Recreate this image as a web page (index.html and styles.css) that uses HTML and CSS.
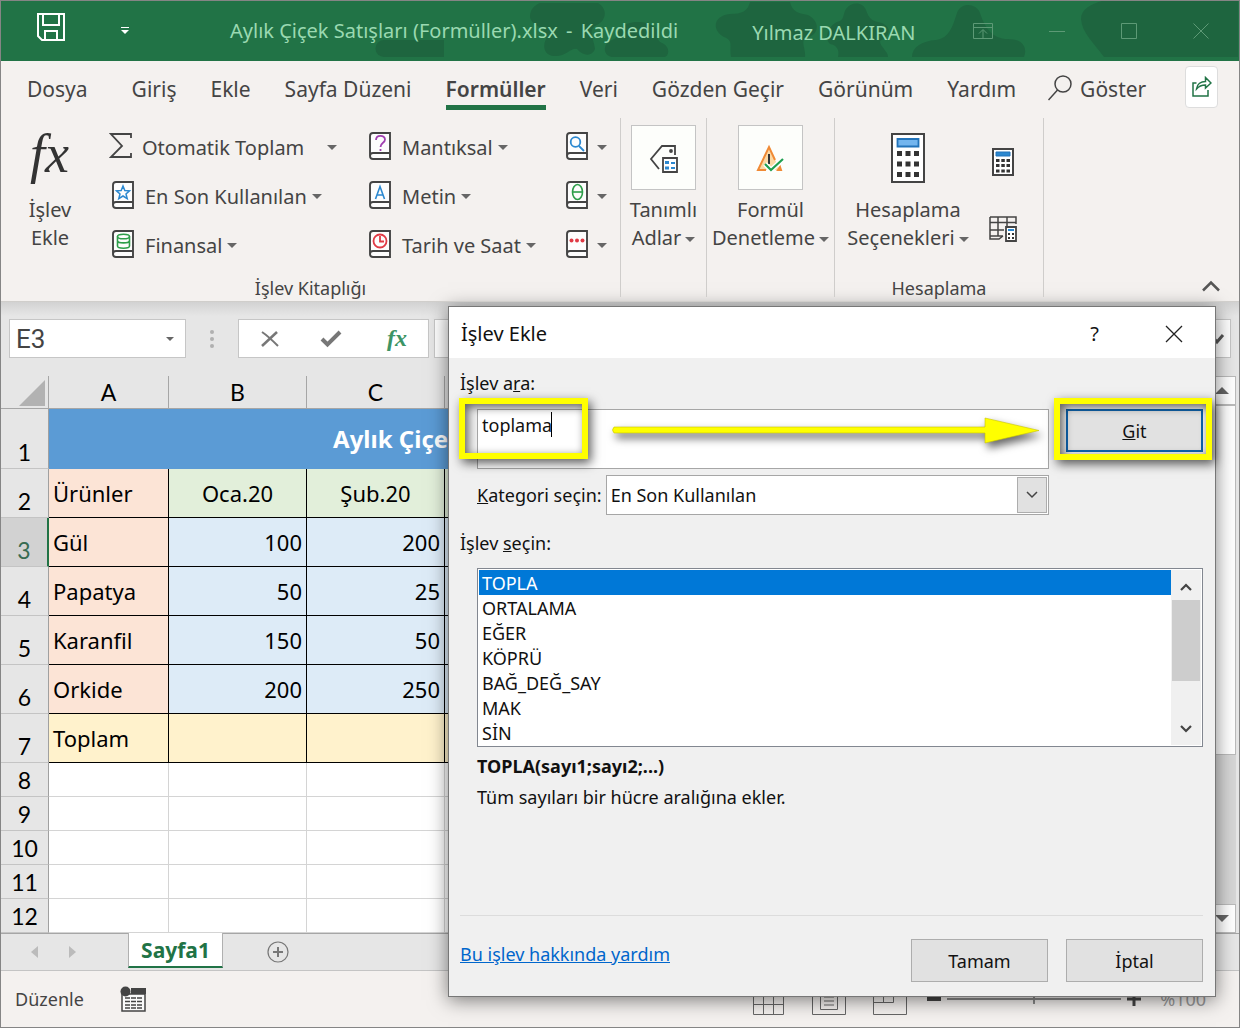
FILE: index.html
```html
<!DOCTYPE html>
<html lang="tr">
<head>
<meta charset="utf-8">
<meta name="viewport" content="width=device-width, initial-scale=1">
<title>Aylık Çiçek Satışları (Formüller).xlsx</title>
<link rel="stylesheet" href="styles.css">
</head>
<body>
<svg class="sprite" aria-hidden="true">
  <symbol id="book" viewBox="0 0 22 28">
    <path d="M4 1H21V27H4Q1 27 1 24V4Q1 1 4 1Z" fill="#fdfdfd"/>
    <path d="M4 1H21V27H4Q1 27 1 24V4Q1 1 4 1ZM1 24Q1 21 4 21H21" fill="none" stroke="#444" stroke-width="1.9"/>
  </symbol>
</svg>

<header class="titlebar">
  <svg class="pattern" viewBox="370 0 870 60" width="870" height="60" aria-hidden="true">
    <g fill="#1e653f">
      <path d="M384 39H444V56H384A8 8 0 0 1 384 39Z"/>
      <path d="M540 2H598C608 8 607 20 595 25C588 30 594 38 595 48C592 56 583 55 577 48C571 46 566 56 554 55C543 54 543 44 546 38C549 27 531 25 530 16C530 8 535 4 540 2Z"/>
      <path d="M620 28C626 20 645 18 656 27C660 32 654 38 662 42C671 46 669 56 664 56H612C602 54 603 42 612 39C620 36 614 34 620 28Z"/>
      <path d="M750 1H790C792 10 797 12 808 14C820 20 820 34 806 37C800 40 806 48 805 56H731C729 44 734 40 724 36C710 28 715 14 730 13C742 13 748 10 750 1Z"/>
      <path d="M846 8C852 0 863 1 866 9C869 18 872 20 882 22C894 28 888 36 880 40C880 46 888 50 888 56H838C840 48 836 44 830 43C823 36 830 22 840 20C844 18 843 13 846 8Z"/>
      <path d="M957 12C961 1 976 2 980 12C984 24 990 36 1005 38C1022 37 1028 46 1024 56H912C912 46 922 40 936 39C950 37 953 24 957 12Z"/>
      <path d="M1102 0H1238V56H1104C1094 42 1082 32 1081 18C1081 8 1091 3 1102 0Z"/>
    </g>
  </svg>
  <button class="tool save" aria-label="Kaydet"><svg width="28" height="28" viewBox="0 0 28 28" fill="none" stroke="#fff" stroke-width="2"><path d="M1 1H27V27H5L1 23ZM6 1V12H22V1M8 27V18H20V27"/></svg></button>
  <button class="tool quick" aria-label="Hızlı erişim"><svg width="8" height="8" viewBox="0 0 8 8" fill="#fff"><path d="M0 0H8V1H0ZM0 3H8L4 7Z"/></svg></button>
  <h1 class="doc">Aylık Çiçek Satışları (Formüller).xlsx <span>-</span> Kaydedildi</h1>
  <span class="user">Yılmaz DALKIRAN</span>
  <div class="window-tools">
    <button class="tool" aria-label="Şerit seçenekleri"><svg width="20" height="16" viewBox="0 0 20 16"><path d="M.5 .5H19.5V15.5H.5ZM.5 4.5H19.5M10 15V7M6 10.500L10 6.500L14 10.500"/></svg></button>
    <button class="tool" aria-label="Simge durumu"><svg width="16" height="16" viewBox="0 0 16 16"><path d="M0 8.500H16"/></svg></button>
    <button class="tool" aria-label="Ekranı kapla"><svg width="16" height="16" viewBox="0 0 16 16"><path d="M.5 .5H15.500V15.500H.5Z"/></svg></button>
    <button class="tool" aria-label="Kapat"><svg width="16" height="16" viewBox="0 0 16 16"><path d="M.5 .5L15.500 15.500M15.500 .5L.5 15.500"/></svg></button>
  </div>
</header>

<section class="ribbon">
  <nav class="tabs">
    <a class="file" href="#">Dosya</a><a href="#">Giriş</a><a href="#">Ekle</a><a href="#">Sayfa Düzeni</a><a class="current" href="#">Formüller</a><a href="#">Veri</a><a href="#">Gözden Geçir</a><a href="#">Görünüm</a><a href="#">Yardım</a>
    <a class="tell" href="#"><svg width="24" height="26" viewBox="0 0 24 26" fill="none" stroke="#444" stroke-width="1.500"><circle cx="15" cy="9" r="8"/><path d="M9.500 15L.5 25"/></svg>Göster</a>
    <button class="share" aria-label="Paylaş"><svg width="20" height="22" viewBox="0 0 20 22" fill="none" stroke="#217346" stroke-width="1.500"><path d="M4.500 7H1V20H16V14"/><path d="M4.500 13C5 8 9 5.500 13.500 5.500V1.500L19 7L13.500 12V9C9.500 9 7 10 4.500 13Z"/></svg></button>
  </nav>
  <div class="groups">
    <div class="group library">
      <div class="library-body">
        <button class="big"><svg class="big-icon" width="80" height="60" viewBox="0 0 80 60"><text x="20" y="40" font-family="Liberation Serif, serif" font-style="italic" font-size="54" fill="#333">fx</text></svg>İşlev<br>Ekle</button>
        <div class="commands">
          <button class="cmd sum"><svg width="24" height="28" viewBox="0 0 24 28" fill="none" stroke="#444" stroke-width="1.800"><path d="M22 6V2H2L13 14L2 25H22V21"/></svg>Otomatik Toplam<i class="caret"></i></button>
          <button class="cmd"><svg width="22" height="28" viewBox="0 0 22 28"><use href="#book"/><path d="M11 5L12.800 9.500L17.500 9.800L14 13L15.200 17.600L11 15L6.800 17.600L8 13L4.500 9.800L9.200 9.500Z" fill="none" stroke="#2b88d0" stroke-width="1.500"/></svg>En Son Kullanılan<i class="caret"></i></button>
          <button class="cmd"><svg width="22" height="28" viewBox="0 0 22 28"><use href="#book"/><g fill="none" stroke="#2e9e4a" stroke-width="1.600"><ellipse cx="11.500" cy="6.500" rx="6" ry="2.300"/><path d="M5.500 6.500V16C5.500 19 17.500 19 17.500 16V6.500M5.500 11C6 13.500 17 13.500 17.500 11"/></g></svg>Finansal<i class="caret"></i></button>
        </div>
        <div class="commands">
          <button class="cmd"><svg width="22" height="28" viewBox="0 0 22 28"><use href="#book"/><path d="M7 8C7 2.500 16 2.500 16 7.500C16 11 11.500 10.500 11.500 15M11.500 17V19" fill="none" stroke="#a03fb0" stroke-width="1.800"/></svg>Mantıksal<i class="caret"></i></button>
          <button class="cmd"><svg width="22" height="28" viewBox="0 0 22 28"><use href="#book"/><path d="M6.500 18L11 5.500L15.500 18M8 14H14" fill="none" stroke="#2b88d0" stroke-width="1.600"/></svg>Metin<i class="caret"></i></button>
          <button class="cmd"><svg width="22" height="28" viewBox="0 0 22 28"><use href="#book"/><g fill="none" stroke="#e03a45" stroke-width="1.800"><circle cx="11" cy="11" r="6.500"/><path d="M11 6V11.500H15"/></g></svg>Tarih ve Saat<i class="caret"></i></button>
        </div>
        <div class="commands more">
          <button class="cmd" aria-label="Arama"><svg width="22" height="28" viewBox="0 0 22 28"><use href="#book"/><g fill="none" stroke="#2b88d0" stroke-width="1.800"><circle cx="9.500" cy="10" r="4.800"/><path d="M13 14L18 19"/></g></svg><i class="caret"></i></button>
          <button class="cmd" aria-label="Matematik"><svg width="22" height="28" viewBox="0 0 22 28"><use href="#book"/><g fill="none" stroke="#2e9e4a" stroke-width="1.600"><ellipse cx="11.500" cy="11" rx="5" ry="7.500"/><path d="M6.500 11H16.500"/></g></svg><i class="caret"></i></button>
          <button class="cmd" aria-label="Diğer"><svg width="22" height="28" viewBox="0 0 22 28"><use href="#book"/><g fill="#e03a45"><circle cx="5.500" cy="10.500" r="2"/><circle cx="11" cy="10.500" r="2"/><circle cx="16.500" cy="10.500" r="2"/></g></svg><i class="caret"></i></button>
        </div>
      </div>
      <p class="group-name">İşlev Kitaplığı</p>
    </div>
    <div class="group">
      <button class="big"><span class="tile"><svg width="30" height="30" viewBox="0 0 30 30" fill="none" stroke="#444" stroke-width="1.800"><path d="M10 26L2 16L13 3H26V12"/><circle cx="22" cy="8" r="1" fill="#444"/><path d="M14 15H28V29H14Z" fill="#fff"/><path d="M16 18H20V21H16ZM16 23.500H20V26.500H16Z" fill="#2b88d0" stroke="none"/><path d="M22 20H26M22 25H26" stroke="#2b88d0"/></svg></span>Tanımlı<br>Adlar<i class="caret"></i></button>
    </div>
    <div class="group">
      <button class="big"><span class="tile"><svg width="30" height="30" viewBox="0 0 30 30" fill="none"><path d="M14 4L25 27H3Z" fill="#fbd9a5"/><path d="M20 17L14 4L3 27H11M23 27H26L25 24Z" stroke="#f08a35" stroke-width="2"/><path d="M14 11V21" stroke="#333" stroke-width="2"/><path d="M10 21L16 27L28 16" stroke="#fff" stroke-width="5"/><path d="M10 21L16 27L28 16" stroke="#1fa050" stroke-width="2.200"/></svg></span>Formül<br>Denetleme<i class="caret"></i></button>
    </div>
    <div class="group calc">
      <div class="calc-body">
        <button class="big"><svg class="big-icon" width="34" height="50" viewBox="0 0 34 50"><path d="M1 1H33V49H1Z" fill="#fff" stroke="#444" stroke-width="2"/><path d="M6.500 6H27.500V13.500H6.500Z" fill="#73b5ee" stroke="#2273b9" stroke-width="1.800"/><path d="M6 18H11V23H6ZM14.500 18H19.500V23H14.500ZM23 18H28V23H23ZM6 28.500H11V33.500H6ZM14.500 28.500H19.500V33.500H14.500ZM23 28.500H28V33.500H23ZM6 39H11V44H6ZM14.500 39H19.500V44H14.500ZM23 39H28V44H23Z" fill="#333"/></svg>Hesaplama<br>Seçenekleri<i class="caret"></i></button>
        <div class="mini">
          <button class="tool" aria-label="Şimdi hesapla"><svg width="22" height="28" viewBox="0 0 22 28"><path d="M1 1H21V27H1Z" fill="#fff" stroke="#444" stroke-width="2"/><path d="M4 4H18V8H4Z" fill="#2b88d0" stroke="#2273b9"/><path d="M4 11H7.500V14H4ZM9.300 11H12.800V14H9.300ZM14.500 11H18V14H14.500ZM4 16H7.500V19H4ZM9.300 16H12.800V19H9.300ZM14.500 16H18V19H14.500ZM4 21.500H7.500V24.500H4ZM9.300 21.500H12.800V24.500H9.300ZM14.500 21.500H18V24.500H14.500Z" fill="#333"/></svg></button>
          <button class="tool" aria-label="Sayfayı hesapla"><svg width="28" height="26" viewBox="0 0 28 26"><path d="M1 1H27V8M1 1V23H10L14 20M1 6.500H27M1 14H15M9 1V20M18 1V10M1 20H14" fill="none" stroke="#444" stroke-width="1.500"/><path d="M17 11H27V25H17Z" fill="#fff" stroke="#444" stroke-width="1.800"/><path d="M19 14H25" stroke="#2b88d0" stroke-width="2"/><path d="M19 17H21V19H19ZM23 17H25V19H23ZM19 21H21V23H19ZM23 21H25V23H23Z" fill="#333"/></svg></button>
        </div>
      </div>
      <p class="group-name">Hesaplama</p>
    </div>
    <div class="collapse"><button class="tool" aria-label="Şeridi daralt"><svg width="20" height="12" viewBox="0 0 20 12" fill="none" stroke="#555" stroke-width="2.500"><path d="M2 10.500L10 2.500L18 10.500"/></svg></button></div>
  </div>
</section>

<main class="workspace">
  <div class="formula-bar">
    <label class="name-box"><input value="E3" aria-label="Ad kutusu"><i class="caret"></i></label>
    <svg class="dots" width="4" height="20" viewBox="0 0 4 20" fill="#b0b0b0"><circle cx="2" cy="3" r="2"/><circle cx="2" cy="10" r="2"/><circle cx="2" cy="17" r="2"/></svg>
    <div class="entry-tools">
      <button class="tool" aria-label="İptal et"><svg width="20" height="20" viewBox="0 0 20 20" fill="none" stroke="#777"><path d="M2 17L17 3" stroke-width="2.500"/><path d="M2 3C8 7 13 12 18 17" stroke-width="2"/></svg></button>
      <button class="tool" aria-label="Gir"><svg width="22" height="20" viewBox="0 0 22 20" fill="none" stroke="#777" stroke-width="4"><path d="M2 10L7.500 15.500L20 3"/></svg></button>
      <button class="tool" aria-label="İşlev ekle"><svg width="32" height="30" viewBox="0 0 32 30"><text x="6" y="22" font-family="Liberation Serif, serif" font-style="italic" font-weight="bold" font-size="24" fill="#3c9465">fx</text></svg></button>
    </div>
    <div class="formula"><input aria-label="Formül çubuğu"><svg width="16" height="12" viewBox="0 0 16 12" fill="none" stroke="#555" stroke-width="3"><path d="M2 2L8 9L14 2"/></svg></div>
  </div>

  <div class="sheet">
    <table>
      <colgroup><col class="col-head"><col class="col-a"><col class="col-n"><col class="col-n"><col class="col-n"><col class="col-n"><col class="col-n"><col></colgroup>
      <thead><tr><th class="corner"><svg width="26" height="26" viewBox="0 0 26 26"><path d="M26 0V26H0Z" fill="#b2b2b2"/></svg></th><th>A</th><th>B</th><th>C</th><th>D</th><th>E</th><th>F</th><th></th></tr></thead>
      <tbody>
        <tr class="first"><th>1</th><td class="title" colspan="6">Aylık Çiçek Satışları</td><td></td></tr>
        <tr class="data"><th>2</th><td class="name">Ürünler</td><td class="month">Oca.20</td><td class="month">Şub.20</td><td class="month"></td><td class="month"></td><td class="month"></td><td></td></tr>
        <tr class="data active"><th>3</th><td class="name">Gül</td><td class="num">100</td><td class="num">200</td><td class="num"></td><td class="num"></td><td class="num"></td><td></td></tr>
        <tr class="data"><th>4</th><td class="name">Papatya</td><td class="num">50</td><td class="num">25</td><td class="num"></td><td class="num"></td><td class="num"></td><td></td></tr>
        <tr class="data"><th>5</th><td class="name">Karanfil</td><td class="num">150</td><td class="num">50</td><td class="num"></td><td class="num"></td><td class="num"></td><td></td></tr>
        <tr class="data"><th>6</th><td class="name">Orkide</td><td class="num">200</td><td class="num">250</td><td class="num"></td><td class="num"></td><td class="num"></td><td></td></tr>
        <tr class="data"><th>7</th><td class="total">Toplam</td><td class="total"></td><td class="total"></td><td class="total"></td><td class="total"></td><td class="total"></td><td></td></tr>
        <tr><th>8</th><td></td><td></td><td></td><td></td><td></td><td></td><td></td></tr>
        <tr><th>9</th><td></td><td></td><td></td><td></td><td></td><td></td><td></td></tr>
        <tr><th>10</th><td></td><td></td><td></td><td></td><td></td><td></td><td></td></tr>
        <tr><th>11</th><td></td><td></td><td></td><td></td><td></td><td></td><td></td></tr>
        <tr><th>12</th><td></td><td></td><td></td><td></td><td></td><td></td><td></td></tr>
      </tbody>
    </table>
    <div class="sheet-scroll">
      <button class="tool" aria-label="Yukarı"><svg width="14" height="7" viewBox="0 0 14 7"><path d="M0 7L7 0L14 7Z" fill="#666"/></svg></button>
      <div class="thumb"></div>
      <button class="tool down" aria-label="Aşağı"><svg width="14" height="7" viewBox="0 0 14 7"><path d="M0 0L7 7L14 0Z" fill="#666"/></svg></button>
    </div>
  </div>

  <dialog class="dialog" open aria-label="İşlev Ekle">
    <div class="dialog-head"><h2>İşlev Ekle</h2><button class="tool" aria-label="Yardım">?</button><button class="tool" aria-label="Kapat"><svg width="18" height="18" viewBox="0 0 18 18" stroke="#222" stroke-width="1.300"><path d="M1 1L17 17M17 1L1 17"/></svg></button></div>
    <form class="dialog-body">
      <label for="search">İşlev a<u>r</u>a:</label>
      <div class="search-row">
        <div class="search-field">
          <textarea id="search">toplama</textarea>
          <span class="text-cursor"></span>
          <span class="mark mark-text"></span>
          <svg class="arrow" width="440" height="50" viewBox="0 0 440 50"><path d="M3 15H374V6L428 18.500L374 31V21H3Q0 18 3 15Z" fill="#ff0" stroke="#c8c400" stroke-width=".6"/></svg>
        </div>
        <div class="go-field"><button class="push go" type="button"><span><u>G</u>it</span></button><span class="mark mark-go"></span></div>
      </div>
      <div class="category-row">
        <label for="category"><u>K</u>ategori seçin:</label>
        <div class="picker"><select id="category"><option>En Son Kullanılan</option></select><span class="picker-arrow"><svg width="12" height="8" viewBox="0 0 12 8" fill="none" stroke="#444" stroke-width="1.500"><path d="M1 1L6 6L11 1"/></svg></span></div>
      </div>
      <label class="list-label" for="functions">İşlev <u>s</u>eçin:</label>
      <div class="list">
        <select id="functions" size="7"><option selected>TOPLA</option><option>ORTALAMA</option><option>EĞER</option><option>KÖPRÜ</option><option>BAĞ_DEĞ_SAY</option><option>MAK</option><option>SİN</option></select>
        <div class="list-scroll"><svg width="12" height="8" viewBox="0 0 12 8" fill="none" stroke="#444" stroke-width="2.200"><path d="M1 7L6 2L11 7"/></svg><i></i><svg width="12" height="8" viewBox="0 0 12 8" fill="none" stroke="#444" stroke-width="2.200"><path d="M1 1L6 6L11 1"/></svg></div>
      </div>
      <div class="about"><strong>TOPLA(sayı1;sayı2;...)</strong><p>Tüm sayıları bir hücre aralığına ekler.</p></div>
      <div class="dialog-foot"><a href="#">Bu işlev hakkında yardım</a><button class="push" type="button">Tamam</button><button class="push" type="button">İptal</button></div>
    </form>
  </dialog>
</main>

<nav class="sheet-tabs">
  <button class="tool" aria-label="Önceki"><svg width="7" height="12" viewBox="0 0 7 12"><path d="M7 0V12L0 6Z" fill="#bbb"/></svg></button>
  <button class="tool" aria-label="Sonraki"><svg width="7" height="12" viewBox="0 0 7 12"><path d="M0 0V12L7 6Z" fill="#bbb"/></svg></button>
  <a href="#">Sayfa1</a>
  <button class="tool" aria-label="Yeni sayfa"><svg width="22" height="22" viewBox="0 0 22 22" fill="none" stroke="#777"><circle cx="11" cy="11" r="10" stroke-width="1.200"/><path d="M6 11H16M11 6V16" stroke-width="2"/></svg></button>
</nav>

<footer class="status">
  <span>Düzenle</span>
  <button class="tool macro" aria-label="Makro kaydet"><svg width="27" height="27" viewBox="0 0 27 27"><path d="M2 8H25V25H2Z" fill="#fafafa" stroke="#444" stroke-width="1.500"/><path d="M11 2H26V8H11Z" fill="#444"/><circle cx="5.500" cy="5.500" r="5" fill="#444"/><path d="M5 12H22M5 15.500H22M5 19H22M5 22H22" stroke="#444" stroke-width="1.300" stroke-dasharray="5 1"/></svg></button>
  <div class="views">
    <button class="tool" aria-label="Normal"><svg width="32" height="32" viewBox="0 0 32 32"><path d="M.5 .5H30.500V31.500H.5ZM.5 11H30.500M.5 21.500H30.500M10.500 .5V31.500M20.500 .5V31.500"/></svg></button>
    <button class="tool" aria-label="Sayfa düzeni"><svg width="34" height="32" viewBox="0 0 34 32"><path d="M.5 .5H33.500V31.500H.5ZM8.500 3.500H25.500V26.500H8.500ZM12 14H22M12 18H22M12 22H22"/></svg></button>
    <button class="tool" aria-label="Sayfa sonu"><svg width="34" height="32" viewBox="0 0 34 32"><path d="M.5 .5H33.500V31.500H.5ZM.5 19.500H20.500V.5M10.500 .5V19.500"/></svg></button>
  </div>
  <div class="zoom"><svg width="14" height="4" viewBox="0 0 14 4"><path d="M0 0H14V4H0Z" fill="#444"/></svg><input type="range" min="0" max="100" value="50" aria-label="Yakınlaştırma"><svg width="14" height="14" viewBox="0 0 14 14"><path d="M0 5.500H14V8.500H0ZM5.500 0H8.500V14H5.500Z" fill="#444"/></svg><span class="percent">%100</span></div>
</footer>
</body>
</html>
```
FILE: styles.css
```css
* { box-sizing: border-box; }
body {
  margin: 0;
  min-height: 100vh;
  display: flex;
  flex-direction: column;
  border: 1px solid #858585;
  background: #f4f1ef;
  color: #444;
  font: 20px/28px "Noto Sans", "Open Sans", sans-serif;
}
button, input, select, textarea { font: inherit; color: inherit; }
button { border: 0; padding: 0; background: none; }
h1, h2, p { margin: 0; font-weight: 400; }
a { color: inherit; text-decoration: none; }
svg { display: block; flex: none; }
.sprite { position: absolute; width: 0; height: 0; }
.tool { display: flex; align-items: center; justify-content: center; }
.caret { display: inline-block; flex: none; border: 5px solid transparent; border-top-color: #666; border-bottom: 0; margin-left: 4px; vertical-align: middle; }

/* Title bar */
.titlebar { position: relative; display: flex; align-items: center; height: 60px; padding: 0 30px 0 36px; background: #217346; overflow: hidden; color: #9ad9b1; }
.titlebar > * { position: relative; }
.titlebar .pattern { position: absolute; right: -1px; top: 0; }
.save { margin-bottom: 8px; }
.quick { margin-left: 56px; }
.doc { margin-left: 101px; font-size: 20px; white-space: nowrap; }
.doc span { padding: 0 3px; }
.user { margin-left: 74px; padding-top: 3px; white-space: nowrap; }
.window-tools { display: flex; gap: 56px; margin-left: auto; }
.window-tools svg { fill: none; stroke: #5d9a76; }

/* Ribbon */
.ribbon { position: relative; z-index: 2; border-bottom: 1px solid #d0cecb; }
.tabs { display: flex; height: 57px; padding: 12px 21px 0 26px; gap: 34px; white-space: nowrap; font-size: 21px; }
.tabs a { padding-top: 2px; height: 37px; }
.tabs .file { margin-right: 10px; }
.tabs .current { font-weight: 600; border-bottom: 5px solid #217346; }
.tabs .tell { display: flex; gap: 8px; margin-left: -2px; }
.share { display: flex; align-items: center; justify-content: center; width: 33px; height: 42px; margin: -7px 0 0 auto; border: 1px solid #ddd; border-radius: 4px; background: #fff; }
.groups { display: grid; grid-template-columns: 620px 86px 128px 209px 1fr; height: 183px; padding-bottom: 4px; }
.group { display: flex; flex-direction: column; align-items: center; border-right: 1px solid #cfcdcb; white-space: nowrap; }
.group-name { margin-top: auto; height: 20px; font-size: 18px; line-height: 22px; }
.big { display: block; align-self: flex-start; padding-top: 7px; text-align: center; }
.group > .big { align-self: center; }
.tile { display: flex; align-items: center; justify-content: center; width: 65px; height: 65px; margin: 0 auto 6px; border: 1px solid #c4c4c4; background: #fdfefb; }
.big-icon { margin: 8px auto 13px; }
.library { align-items: stretch; }
.library .group-name { text-align: center; }
.library-body { display: grid; grid-template-columns: 98px 257px 197px 1fr; }
.library .big-icon { margin: 7px auto 4px; overflow: visible; }
.commands { display: flex; flex-direction: column; padding: 5px 0 0 13px; }
.commands .cmd { display: flex; align-items: center; gap: 11px; height: 49px; }
.cmd svg { margin-bottom: 3px; }
.commands .cmd.sum { gap: 9px; margin-left: -3px; }
.cmd .caret { margin-left: -6px; }
.cmd.sum .caret { margin-left: 14px; }
.commands.more .caret { margin-left: -2px; }
.calc-body { display: flex; gap: 20px; padding-right: 14px; }
.mini { display: flex; flex-direction: column; align-items: center; gap: 40px; padding-top: 30px; }
.collapse { display: flex; justify-content: flex-end; align-items: flex-end; padding: 0 18px 5px 0; }

/* Formula bar */
.workspace { position: relative; flex: 1; background: #e6e6e6; display: flex; flex-direction: column; }
.formula-bar { display: flex; align-items: center; padding: 17px 8px 18px; background: linear-gradient(#d2d2d2, #e6e6e6 14px); }
.name-box, .entry-tools, .formula { display: flex; align-items: center; height: 39px; border: 1px solid #c6c6c6; background: #fff; }
.name-box { width: 177px; padding: 0 11px 0 6px; }
.name-box input { min-width: 0; flex: 1; border: 0; padding: 0; font-size: 26px; font-family: Roboto, sans-serif; }
.name-box .caret { border-width: 4px 4px 0; }
.dots { margin: 0 24px; }
.entry-tools { width: 191px; padding: 0 15px 0 21px; justify-content: space-between; }
.formula { flex: 1; margin-left: 5px; padding-right: 5px; }
.formula input { min-width: 0; flex: 1; border: 0; background: none; }

/* Sheet */
.sheet { flex: 1; display: flex; padding-right: 3px; }
table { flex: 1; align-self: flex-start; table-layout: fixed; width: 100%; border-spacing: 0; color: #000; font: 23px/30px Lato, sans-serif; background: #fff; }
.col-head { width: 48px; }
.col-a { width: 120px; }
.col-n { width: 138px; }
th, td { height: 34px; padding: 0; border: 0 solid #d4d4d4; border-width: 0 1px 1px 0; overflow: hidden; white-space: nowrap; }
th { background: #e6e6e6; font-weight: 400; vertical-align: bottom; border-color: #a0a0a0; border-bottom-color: #c4c4c4; }
thead th { height: 33px; border-color: #a6a6a6; }
tbody th { padding-bottom: 1px; }
thead th { padding-bottom: 1px; }
.corner svg { margin: 0 3px 1px auto; }
.first > * { height: 60px; }
.title { padding-right: 8px; text-align: center; background: #5b9bd5; color: #fff; font-weight: 700; border-color: #5b9bd5; font-size: 24px; font-family: "Noto Sans", sans-serif; }
.data > * { height: 49px; }
.data td { border-color: #000; font-family: "Noto Sans", sans-serif; font-size: 22px; padding: 0 4px; }
.data .name { background: #fce4d6; }
.month { background: #e2efda; text-align: center; }
.num { background: #ddebf7; text-align: right; }
.total { background: #fff2cc; }
.active th { background: #d2d2d2; color: #376b51; border-right: 2px solid #217346; }
.sheet-scroll { display: flex; flex-direction: column; flex: 0 0 28px; background: #d6d6d6; }
.sheet-scroll .tool { height: 29px; background: #fff; border: 1px solid #bbb; }
.thumb { height: 350px; background: #fff; border: 1px solid #bbb; }
.sheet-scroll .down { margin-top: auto; }

/* Dialog */
.dialog { position: absolute; inset: 4px 23px auto 447px; width: auto; margin: 0; padding: 0; border: 1px solid #777; background: #f0f0f0; color: #111; box-shadow: 0 3px 18px rgba(0, 0, 0, .5); font-size: 18px; line-height: 25px; z-index: 1; }
.dialog-head { display: flex; align-items: center; height: 51px; padding: 2px 32px 0 12px; background: #fff; font-size: 20px; }
.dialog-head h2 { flex: 1; font-size: 20px; }
.dialog-head .tool { margin-left: 66px; }
.dialog-body { padding: 13px 12px 14px 11px; }
.dialog-body label { display: block; }
.search-row { display: grid; grid-template-columns: 1fr 137px; gap: 17px; margin: 13px 0 6px 17px; }
.search-field, .go-field { position: relative; }
textarea { display: block; width: 100%; height: 60px; padding: 3px 4px; border: 1px solid #a6a6a6; background: #fff; resize: none; outline: 0; }
.text-cursor { position: absolute; left: 74px; top: 3px; width: 1px; height: 25px; background: #000; }
.mark { position: absolute; border: 6px solid #ff0; pointer-events: none; box-shadow: 3px 4px 10px rgba(0, 0, 0, .65), inset 3px 3px 10px rgba(0, 0, 0, .6); }
.mark-text { left: -18px; top: -11px; width: 129px; height: 61px; }
.mark-go { inset: -11px -9px -8px -12px; }
.arrow { position: absolute; left: 134px; top: 3px; filter: drop-shadow(3px 5px 4px rgba(0, 0, 0, .6)); }
.push { width: 137px; height: 43px; padding-top: 1px; border: 1px solid #adadad; background: #e1e1e1; }
.go-field { align-self: start; }
.go { display: block; width: 100%; border: 2px solid #0e63ac; }
.category-row { display: flex; align-items: center; gap: 4px; margin: 0 154px 0 17px; }
.picker { position: relative; flex: 1; }
.picker select { display: block; width: 100%; height: 40px; appearance: none; border: 1px solid #a6a6a6; border-radius: 0; background: #fff; padding: 0 4px; }
.picker-arrow { position: absolute; inset: 2px 2px 2px auto; width: 30px; display: flex; align-items: center; justify-content: center; border: 1px solid #adadad; background: #e1e1e1; pointer-events: none; }
.category-row label { white-space: nowrap; }
.dialog-body .list-label { margin: 16px 0 12px; }
.list { display: flex; height: 179px; margin-left: 17px; padding: 1px; border: 1px solid #828790; background: #fff; }
.list select { flex: 1; height: 175px; padding: 0; border: 0; border-radius: 0; outline: 0; overflow: hidden; background: #fff; }
.list option { min-height: 25px; height: 25px; padding: 1px 3px 0; line-height: 24px; }
.list option:checked { background: #0078d7 linear-gradient(#0078d7, #0078d7); color: #fff; }
.list-scroll { width: 30px; display: flex; flex-direction: column; align-items: center; padding: 13px 1px 12px; background: #f0f0f0; }
.list-scroll i { width: 28px; height: 81px; margin: 9px 0 auto; background: #cdcdcd; }
.about { min-height: 169px; padding: 7px 0 0 17px; border-bottom: 1px solid #dcdcdc; }
.about p { margin-top: 6px; }
.dialog-foot { display: flex; align-items: center; gap: 18px; padding-top: 23px; }
.dialog-foot a { margin: 0 auto 13px 0; color: #0066cc; text-decoration: underline; }

/* Sheet tabs and status bar */
.sheet-tabs { display: flex; align-items: center; height: 38px; padding-left: 30px; background: #e6e6e6; border: 1px solid #a6a6a6; border-width: 1px 0; border-bottom-color: #c4c4c4; }
.sheet-tabs .tool + .tool { margin-left: 31px; }
.sheet-tabs a { align-self: flex-start; width: 95px; height: 35px; margin: -1px 44px 0 52px; background: #fff; border: 1px solid #b0b0b0; border-width: 0 1px 2px; border-bottom-color: #217346; color: #217346; font-weight: 700; font-size: 21px; line-height: 34px; text-align: center; }
.status { display: flex; align-items: center; height: 56px; padding: 0 33px 0 14px; font-size: 18px; }
.macro { margin-left: 36px; }
.views { display: flex; gap: 27px; margin-left: auto; }
.views svg { fill: none; stroke: #666; }
.zoom { display: flex; align-items: center; gap: 6px; margin-left: 20px; color: #999; }
.zoom input { width: 174px; height: 10px; margin: 0; appearance: none; background: linear-gradient(#8a8a8a, #8a8a8a) center / 100% 2px no-repeat; }
.zoom input::-webkit-slider-thumb { appearance: none; width: 2px; height: 10px; background: #8a8a8a; }
.percent { margin-left: 13px; }
```
